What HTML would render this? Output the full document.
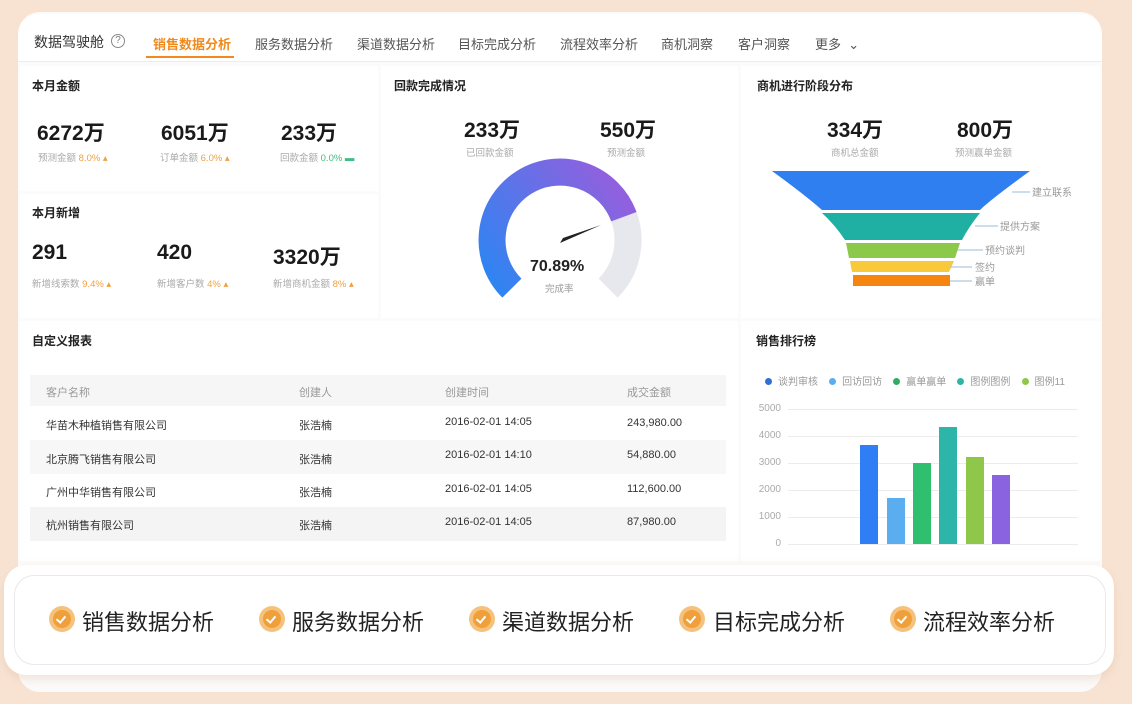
<!DOCTYPE html>
<html><head><meta charset="utf-8"><style>
*{margin:0;padding:0;box-sizing:border-box}
body{width:1132px;height:704px;overflow:hidden;background:#f8e3d3;font-family:"Liberation Sans","Noto Sans CJK SC",sans-serif;color:#222;position:relative}
.a{position:absolute;white-space:nowrap}
.card{position:absolute;left:18px;top:12px;width:1084px;height:680px;background:#fbfbfb;border-radius:22px}
.t{font-size:13px;color:#555}
.h{font-size:12px;font-weight:bold;color:#222}
.big{font-size:21px;font-weight:bold;color:#1a1a1a}
.s{font-size:9.5px;color:#aaa}
.o{color:#f0a040}.g{color:#3cbf80}
.hl{position:absolute;background:#ececec}
.cell{font-size:11px;color:#333}
.th{font-size:11px;color:#999}
.yl{font-size:10px;color:#aaa;text-align:right;width:26px}
.leg{font-size:10px;color:#999}
.dot{display:inline-block;width:7px;height:7px;border-radius:50%;margin-right:6px;vertical-align:0}
.bi{font-size:22px;color:#222}
.ck{position:absolute;width:26px;height:26px;border-radius:50%;background:#f5c27e}
.ck::after{content:"";position:absolute;left:4px;top:4px;width:18px;height:18px;border-radius:50%;background:#f0a03a}
.ck span{position:absolute;left:9px;top:8px;width:6px;height:9px;border-right:2px solid #fff;border-bottom:2px solid #fff;transform:rotate(40deg);z-index:1}
</style></head><body>
<div class="card"></div>
<div class="a" style="left:18px;top:14px;width:1084px;height:48px;background:#fff;border-radius:22px 22px 0 0;border-bottom:1px solid #ececec"></div>
<div class="a" style="left:34px;top:32px;font-size:14px;color:#333">数据驾驶舱</div>
<div class="a" style="left:111px;top:34px;width:14px;height:14px;border:1px solid #888;border-radius:50%;font-size:10px;color:#777;text-align:center;line-height:12px">?</div>
<div class="a t" style="left:153px;top:34px;color:#f08a1c;font-weight:bold">销售数据分析</div>
<div class="a" style="left:146px;top:56px;width:88px;height:2px;background:#f08a1c"></div>
<div class="a t" style="left:255px;top:34px">服务数据分析</div>
<div class="a t" style="left:357px;top:34px">渠道数据分析</div>
<div class="a t" style="left:458px;top:34px">目标完成分析</div>
<div class="a t" style="left:560px;top:34px">流程效率分析</div>
<div class="a t" style="left:661px;top:34px">商机洞察</div>
<div class="a t" style="left:738px;top:34px">客户洞察</div>
<div class="a t" style="left:815px;top:34px">更多 &nbsp;⌄</div>

<div class="a" style="left:20px;top:66px;width:358px;height:125px;background:#fff"></div>
<div class="a" style="left:20px;top:194px;width:358px;height:124px;background:#fff"></div>
<div class="a" style="left:381px;top:66px;width:357px;height:252px;background:#fff"></div>
<div class="a" style="left:741px;top:66px;width:359px;height:252px;background:#fff"></div>
<div class="a" style="left:20px;top:321px;width:718px;height:240px;background:#fff"></div>
<div class="a" style="left:741px;top:321px;width:359px;height:240px;background:#fff"></div>

<div class="a h" style="left:32px;top:77px">本月金额</div>
<div class="a big" style="left:37px;top:117px">6272万</div>
<div class="a s" style="left:38px;top:150px">预测金额 <span class="o">8.0% ▴</span></div>
<div class="a big" style="left:161px;top:117px">6051万</div>
<div class="a s" style="left:160px;top:150px">订单金额 <span class="o">6.0% ▴</span></div>
<div class="a big" style="left:281px;top:117px">233万</div>
<div class="a s" style="left:280px;top:150px">回款金额 <span class="g">0.0% ▬</span></div>

<div class="a h" style="left:32px;top:204px">本月新增</div>
<div class="a big" style="left:32px;top:241px">291</div>
<div class="a s" style="left:32px;top:276px">新增线索数 <span class="o">9.4% ▴</span></div>
<div class="a big" style="left:157px;top:241px">420</div>
<div class="a s" style="left:157px;top:276px">新增客户数 <span class="o">4% ▴</span></div>
<div class="a big" style="left:273px;top:241px">3320万</div>
<div class="a s" style="left:273px;top:276px">新增商机金额 <span class="o">8% ▴</span></div>

<div class="a h" style="left:394px;top:77px">回款完成情况</div>
<div class="a big" style="left:464px;top:114px">233万</div>
<div class="a s" style="left:466px;top:145px">已回款金额</div>
<div class="a big" style="left:600px;top:114px">550万</div>
<div class="a s" style="left:607px;top:145px">预测金额</div>
<svg class="a" style="left:470px;top:150px" width="180" height="150" viewBox="470 150 180 150">
<defs><linearGradient id="gg" x1="490" y1="280" x2="630" y2="180" gradientUnits="userSpaceOnUse"><stop offset="0" stop-color="#2f84f2"/><stop offset="1" stop-color="#9a5ddc"/></linearGradient></defs>
<path d="M623.9 216.7 A68 68 0 0 1 608.1 288.1" fill="none" stroke="#e7e7ee" stroke-width="27"/>
<path d="M511.9 288.1 A68 68 0 1 1 623.9 216.7" fill="none" stroke="url(#gg)" stroke-width="27"/>
<path d="M560 243 L601 225 L563 238 Z" fill="#222"/>
</svg>
<div class="a" style="left:530px;top:258px;font-size:16px;font-weight:bold">70.89%</div>
<div class="a s" style="left:545px;top:281px;color:#999">完成率</div>

<div class="a h" style="left:757px;top:77px">商机进行阶段分布</div>
<div class="a big" style="left:827px;top:114px">334万</div>
<div class="a s" style="left:831px;top:145px">商机总金额</div>
<div class="a big" style="left:957px;top:114px">800万</div>
<div class="a s" style="left:955px;top:145px">预测赢单金额</div>
<svg class="a" style="left:760px;top:165px" width="340" height="130" viewBox="760 165 340 130">
<path d="M772 171 L1030 171 Q990 200 980 210 L822 210 Q805 195 772 171Z" fill="#2f7ff0"/>
<path d="M822 213 L980 213 Q968 228 962 240 L845 240 Q835 225 822 213Z" fill="#1fb0a3"/>
<path d="M846 243 L960 243 L955 258 L849 258Z" fill="#8cc94b"/>
<path d="M850 261 L954 261 L949 272 L852 272Z" fill="#f8c93a"/>
<rect x="853" y="275" width="97" height="11" fill="#f5850f"/>
<g stroke="#9bbdd5" stroke-width="1"><line x1="1012" y1="192" x2="1030" y2="192"/><line x1="975" y1="226" x2="998" y2="226"/><line x1="957" y1="250" x2="983" y2="250"/><line x1="950" y1="267" x2="972" y2="267"/><line x1="950" y1="281" x2="972" y2="281"/></g>
<g font-size="10" fill="#999"><text x="1032" y="196">建立联系</text><text x="1000" y="230">提供方案</text><text x="985" y="254">预约谈判</text><text x="975" y="271">签约</text><text x="975" y="285">赢单</text></g>
</svg>

<div class="a h" style="left:32px;top:332px">自定义报表</div>
<div class="a" style="left:30px;top:375px;width:696px;height:31px;background:#f6f6f6"></div>
<div class="a" style="left:30px;top:440px;width:696px;height:34px;background:#f7f7f7"></div>
<div class="a" style="left:30px;top:507px;width:696px;height:34px;background:#f4f4f4"></div>
<div class="a th" style="left:46px;top:384px">客户名称</div>
<div class="a th" style="left:299px;top:384px">创建人</div>
<div class="a th" style="left:445px;top:384px">创建时间</div>
<div class="a th" style="left:627px;top:384px">成交金额</div>
<div class="a cell" style="left:46px;top:417px">华苗木种植销售有限公司</div><div class="a cell" style="left:299px;top:417px">张浩楠</div><div class="a cell" style="left:445px;top:416px">2016-02-01 14:05</div><div class="a cell" style="left:627px;top:417px">243,980.00</div>
<div class="a cell" style="left:46px;top:451px">北京腾飞销售有限公司</div><div class="a cell" style="left:299px;top:451px">张浩楠</div><div class="a cell" style="left:445px;top:449px">2016-02-01 14:10</div><div class="a cell" style="left:627px;top:449px">54,880.00</div>
<div class="a cell" style="left:46px;top:484px">广州中华销售有限公司</div><div class="a cell" style="left:299px;top:484px">张浩楠</div><div class="a cell" style="left:445px;top:483px">2016-02-01 14:05</div><div class="a cell" style="left:627px;top:483px">112,600.00</div>
<div class="a cell" style="left:46px;top:517px">杭州销售有限公司</div><div class="a cell" style="left:299px;top:517px">张浩楠</div><div class="a cell" style="left:445px;top:516px">2016-02-01 14:05</div><div class="a cell" style="left:627px;top:516px">87,980.00</div>

<div class="a h" style="left:756px;top:332px">销售排行榜</div>
<div class="a leg" style="left:765px;top:373px"><span class="dot" style="background:#2f6fd8"></span>谈判审核 &nbsp;&nbsp; <span class="dot" style="background:#5aaef0"></span>回访回访 &nbsp;&nbsp; <span class="dot" style="background:#2fae62"></span>赢单赢单 &nbsp;&nbsp; <span class="dot" style="background:#2cb5a8"></span>图例图例 &nbsp;&nbsp; <span class="dot" style="background:#8fc74a"></span>图例11</div>
<div class="a yl" style="left:755px;top:403px">5000</div>
<div class="a yl" style="left:755px;top:430px">4000</div>
<div class="a yl" style="left:755px;top:457px">3000</div>
<div class="a yl" style="left:755px;top:484px">2000</div>
<div class="a yl" style="left:755px;top:511px">1000</div>
<div class="a yl" style="left:755px;top:538px">0</div>
<div class="hl" style="left:788px;top:409px;width:290px;height:1px"></div>
<div class="hl" style="left:788px;top:436px;width:290px;height:1px"></div>
<div class="hl" style="left:788px;top:463px;width:290px;height:1px"></div>
<div class="hl" style="left:788px;top:490px;width:290px;height:1px"></div>
<div class="hl" style="left:788px;top:517px;width:290px;height:1px"></div>
<div class="hl" style="left:788px;top:544px;width:290px;height:1px"></div>
<div class="a" style="left:860px;top:445px;width:18px;height:99px;background:#2f7ef5"></div>
<div class="a" style="left:887px;top:498px;width:18px;height:46px;background:#5aaef0"></div>
<div class="a" style="left:913px;top:463px;width:18px;height:81px;background:#2fbf6f"></div>
<div class="a" style="left:939px;top:427px;width:18px;height:117px;background:#2cb5a8"></div>
<div class="a" style="left:966px;top:457px;width:18px;height:87px;background:#8fc74a"></div>
<div class="a" style="left:992px;top:475px;width:18px;height:69px;background:#8a64e0"></div>

<div class="a" style="left:4px;top:565px;width:1110px;height:110px;background:#fff;border-radius:22px;box-shadow:0 4px 10px rgba(220,180,150,.35)"></div>
<div class="a" style="left:14px;top:575px;width:1092px;height:90px;border:1px solid #e8e8ee;border-radius:20px"></div>
<div class="ck" style="left:49px;top:606px"><span></span></div><div class="a bi" style="left:82px;top:605px">销售数据分析</div>
<div class="ck" style="left:259px;top:606px"><span></span></div><div class="a bi" style="left:292px;top:605px">服务数据分析</div>
<div class="ck" style="left:469px;top:606px"><span></span></div><div class="a bi" style="left:502px;top:605px">渠道数据分析</div>
<div class="ck" style="left:679px;top:606px"><span></span></div><div class="a bi" style="left:713px;top:605px">目标完成分析</div>
<div class="ck" style="left:890px;top:606px"><span></span></div><div class="a bi" style="left:923px;top:605px">流程效率分析</div>
</body></html>
